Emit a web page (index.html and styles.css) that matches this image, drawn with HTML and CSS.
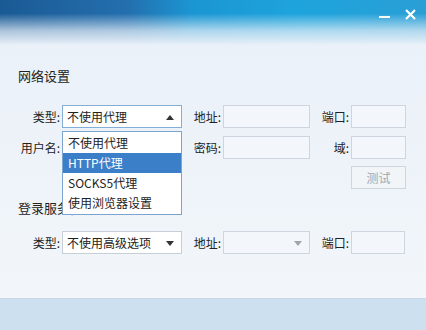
FILE: index.html
```html
<!DOCTYPE html>
<html lang="zh-CN">
<head>
    <meta charset="UTF-8">
    <title>网络设置</title>
    <link rel="stylesheet" href="styles.css">
</head>
<body>
    <div class="window">
        <div class="titlebar">
            <span class="btn-min"></span>
            <svg class="btn-close" width="11" height="11" viewBox="0 0 11 11">
                <path d="M1 1 L10 10 M10 1 L1 10" stroke="#fff" stroke-width="2.2" fill="none"/>
            </svg>
        </div>

        <div class="content">
            <h2>网络设置</h2>

            <div class="row">
                <label>类型:</label>
                <div class="select focused">
                    <span>不使用代理</span>
                    <i class="arrow up"></i>
                    <ul class="dropdown">
                        <li>不使用代理</li>
                        <li class="active">HTTP代理</li>
                        <li>SOCKS5代理</li>
                        <li>使用浏览器设置</li>
                    </ul>
                </div>
                <label>地址:</label>
                <div class="input"></div>
                <label>端口:</label>
                <div class="input"></div>
            </div>

            <div class="row">
                <label>用户名:</label>
                <div class="input"></div>
                <label>密码:</label>
                <div class="input"></div>
                <label>域:</label>
                <div class="input"></div>
            </div>

            <div class="row btn-row">
                <button class="test-btn">测试</button>
            </div>

            <h2 class="second">登录服务器</h2>

            <div class="row">
                <label>类型:</label>
                <div class="select white">
                    <span>不使用高级选项</span>
                    <i class="arrow down"></i>
                </div>
                <label>地址:</label>
                <div class="select disabled">
                    <span></span>
                    <i class="arrow down grey"></i>
                </div>
                <label>端口:</label>
                <div class="input short"></div>
            </div>
        </div>

        <div class="footer"></div>
    </div>
</body>
</html>
```

FILE: styles.css
```css
body {
    margin: 0;
    font-family: "Noto Sans CJK SC", "Liberation Sans", sans-serif;
    font-size: 12px;
    color: #222;
}

.window {
    width: 426px;
    height: 330px;
    display: flex;
    flex-direction: column;
    background: linear-gradient(to bottom, #e9f0f8 0%, #eef3f9 50%, #f3f7fb 100%);
    overflow: hidden;
}

.titlebar {
    height: 45px;
    flex-shrink: 0;
    display: flex;
    justify-content: flex-end;
    align-items: flex-start;
    gap: 15px;
    padding-right: 10px;
    background:
        linear-gradient(to bottom, rgba(233, 240, 248, 0) 0%, rgba(233, 240, 248, 0) 30%, rgba(233, 240, 248, 0.7) 68%, #e9f0f8 100%),
        linear-gradient(to right, #1a5a94 0%, #246fae 30%, #1b96d2 45%, #1ea4dc 70%, #2a9fd6 100%);
}

.btn-min {
    width: 11px;
    height: 2px;
    margin-top: 16px;
    background: #fff;
}

.btn-close {
    margin-top: 9px;
}

.content {
    padding-left: 18px;
    position: relative;
}

h2 {
    margin: 22px 0 0;
    font-size: 13px;
    font-weight: normal;
    line-height: 18px;
}

h2.second {
    margin-top: 10px;
}

.row {
    display: grid;
    grid-template-columns: 44px 120px 41px 87px 41px 55px;
    align-items: center;
    height: 23px;
    margin-top: 8px;
}

.content h2 + .row {
    margin-top: 20px;
}

h2.second + .row {
    margin-top: 14px;
}

.row label {
    text-align: right;
    padding-right: 2px;
    white-space: nowrap;
}

.input {
    height: 21px;
    border: 1px solid #cdd6df;
    background: #f3f6fa;
}

.input.short {
    width: 52px;
}

.select {
    position: relative;
    height: 21px;
    border: 1px solid #c6cfd8;
    background: #fff;
    display: flex;
    align-items: center;
    padding-left: 4px;
}

.select.focused {
    border-color: #84aed6;
}

.select.disabled {
    background: #f3f6fa;
    border-color: #cdd6df;
}

.arrow {
    position: absolute;
    right: 7px;
    top: 9px;
    width: 0;
    height: 0;
    border-left: 4px solid transparent;
    border-right: 4px solid transparent;
}

.arrow.up {
    border-bottom: 5px solid #333;
}

.arrow.down {
    border-top: 5px solid #333;
}

.arrow.grey {
    border-top-color: #a0a6ac;
}

.dropdown {
    position: absolute;
    left: -1px;
    top: 25px;
    width: 118px;
    margin: 0;
    padding: 1px 0;
    list-style: none;
    background: #fff;
    border: 1px solid #7ba5cf;
    z-index: 2;
}

.dropdown li {
    height: 20px;
    line-height: 20px;
    padding-left: 5px;
    white-space: nowrap;
}

.dropdown li.active {
    background: #3b7fc9;
    color: #fff;
}

.btn-row {
    margin-top: 7px;
}

.test-btn {
    grid-column: 6;
    height: 23px;
    border: 1px solid #cdd6df;
    background: #f2f5f8;
    color: #a0a8b0;
    font-family: inherit;
    font-size: 12px;
    padding: 0;
}

.footer {
    margin-top: auto;
    height: 31px;
    border-top: 1px solid #c8d8e6;
    background: #cde0f0;
}
```
